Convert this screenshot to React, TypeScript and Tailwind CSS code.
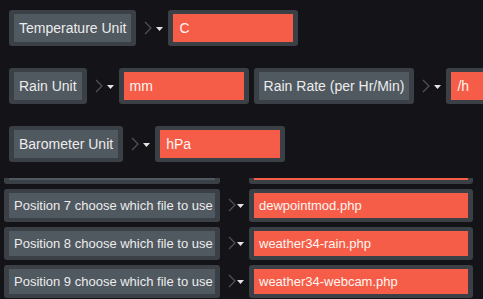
import React from 'react';

const font = { fontFamily: '"Liberation Sans", Arial, sans-serif' };

function Arrow({ small }: { small?: boolean }) {
  return (
    <div className="flex items-center shrink-0">
      <svg width="8" height="14" viewBox="0 0 8 14" className="ml-[8px]">
        <polyline points="1,1 7,7 1,13" fill="none" stroke="#50545a" strokeWidth="1.2" />
      </svg>
      <svg width="7" height="5" viewBox="0 0 7 5" className={small ? 'ml-[1px] mt-[3px]' : 'ml-[4px] mt-[3px]'}>
        <polygon points="0,0 7,0 3.5,4" fill="#e4e4e4" />
      </svg>
    </div>
  );
}

function Label({ text, small, w }: { text: string; small?: boolean; w?: string }) {
  return (
    <div className="shrink-0 rounded-[3px] bg-[#3b4046] py-[4px] px-[5px]">
      <div
        className={`bg-[#505860] text-[#ececec] whitespace-nowrap ${
          small ? 'h-[25px] leading-[25px] text-[13px] px-[5px]' : 'h-[28px] leading-[28px] text-[14px] px-[5px]'
        } ${w ?? ''}`}
      >
        {text}
      </div>
    </div>
  );
}

function Field({ value, small, w }: { value: string; small?: boolean; w: string }) {
  return (
    <div className="shrink-0 rounded-[3px] bg-[#3b4046] py-[4px] px-[5px] ml-[5px]">
      <div
        className={`bg-[#f65d48] text-[#fff5f2] whitespace-nowrap ${
          small ? 'h-[25px] leading-[25px] text-[13px] px-[5px]' : 'h-[28px] leading-[28px] text-[14px] px-[6px]'
        } ${w}`}
      >
        {value}
      </div>
    </div>
  );
}

function PosRow({ n, file }: { n?: number; file: string }) {
  return (
    <div className="flex items-center h-[34px]">
      <Label text={n ? `Position ${n} choose which file to use` : ''} small w="w-[206px]" />
      <Arrow small />
      <Field value={file} small w="w-[214px]" />
    </div>
  );
}

export default function App() {
  return (
    <div className="w-[483px] h-[299px] bg-[#141418] overflow-hidden" style={font}>
      <div className="pl-[9px] pt-[10px] flex flex-col gap-[22px]">
        <div className="flex items-center h-[36px]">
          <Label text="Temperature Unit" />
          <Arrow />
          <Field value="C" w="w-[120px]" />
        </div>
        <div className="flex items-center h-[36px]">
          <Label text="Rain Unit" />
          <Arrow />
          <Field value="mm" w="w-[120px]" />
          <div className="ml-[5px] flex items-center">
            <Label text="Rain Rate (per Hr/Min)" />
            <Arrow />
            <Field value="/h" w="w-[120px]" />
          </div>
        </div>
        <div className="flex items-center h-[36px]">
          <Label text="Barometer Unit" />
          <Arrow />
          <Field value="hPa" w="w-[120px]" />
        </div>
      </div>
      <div className="mt-[16px] h-[121px] overflow-hidden pl-[4px]">
        <div className="mt-[-28px] flex flex-col gap-[4px]">
          <PosRow file="" />
          <PosRow n={7} file="dewpointmod.php" />
          <PosRow n={8} file="weather34-rain.php" />
          <PosRow n={9} file="weather34-webcam.php" />
        </div>
      </div>
    </div>
  );
}
